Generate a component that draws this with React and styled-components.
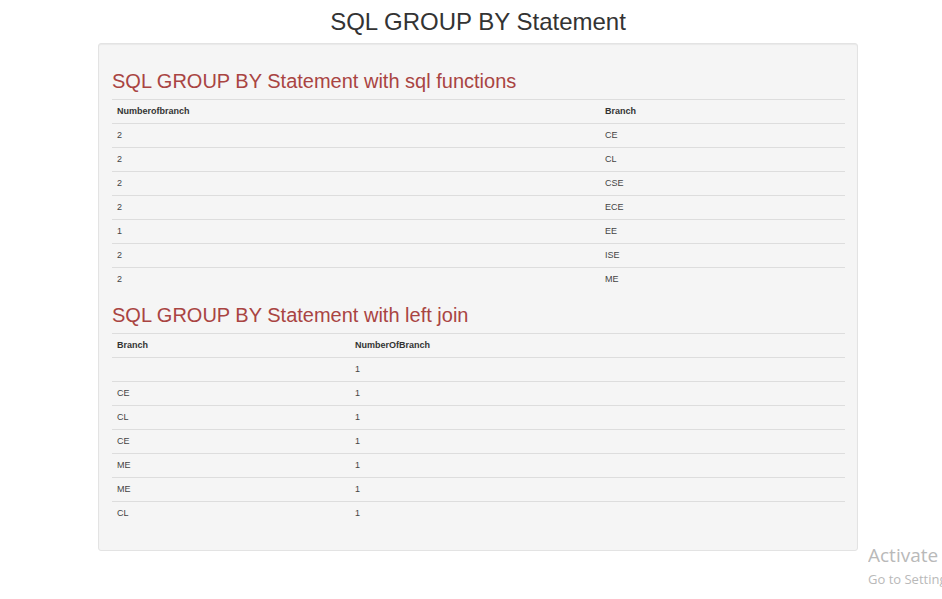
import React from "react";
import styled, { createGlobalStyle } from "styled-components";

const Global = createGlobalStyle`
  html, body { margin: 0; padding: 0; background: #fff; }
  body { font-family: "Liberation Sans", Arial, sans-serif; color: #333; overflow: hidden; }
`;

const Page = styled.div`
  width: 942px;
  height: 599px;
  position: relative;
  overflow: hidden;
`;

const Title = styled.h1`
  margin: 0;
  padding: 8px 0 7px;
  font-size: 24px;
  line-height: 28px;
  font-weight: 400;
  text-align: center;
  color: #333;
  padding-left: 14px;
`;

const Well = styled.div`
  margin-left: 98px;
  width: 760px;
  height: 508px;
  box-sizing: border-box;
  background: #f5f5f5;
  border: 1px solid #e3e3e3;
  border-radius: 3px;
  box-shadow: inset 0 1px 1px rgba(0, 0, 0, 0.05);
  padding: 25px 13px 0 13px;
`;

const Heading = styled.h2`
  margin: ${(p) => p.$top}px 0 0;
  font-size: 20px;
  line-height: 24px;
  font-weight: 400;
  color: #a94442;
  padding-bottom: 6px;
`;

const Table = styled.table`
  width: 733px;
  border-collapse: collapse;
  table-layout: fixed;
  font-size: 9px;
`;

const Th = styled.th`
  text-align: left;
  font-weight: 700;
  height: 22px;
  padding: 0 5px 1px;
  box-sizing: content-box;
  border-top: 1px solid #ddd;
  color: #333;
`;

const Td = styled.td`
  height: 22px;
  padding: 0 5px 1px;
  box-sizing: content-box;
  border-top: 1px solid #ddd;
  color: #444;
`;

const Watermark = styled.div`
  position: absolute;
  left: 868px;
  top: 543px;
  width: 74px;
  overflow: hidden;
  white-space: nowrap;
  color: #b9b9b9;
  font-family: "Open Sans", "Noto Sans", sans-serif;
`;

const WmTitle = styled.div`
  font-size: 19px;
  line-height: 25px;
`;

const WmSub = styled.div`
  font-size: 13px;
  line-height: 22px;
`;

const t1 = [
  ["2", "CE"],
  ["2", "CL"],
  ["2", "CSE"],
  ["2", "ECE"],
  ["1", "EE"],
  ["2", "ISE"],
  ["2", "ME"],
];

const t2 = [
  ["", "1"],
  ["CE", "1"],
  ["CL", "1"],
  ["CE", "1"],
  ["ME", "1"],
  ["ME", "1"],
  ["CL", "1"],
];

function DataTable({ headers, rows, firstWidth }) {
  return (
    <Table>
      <colgroup>
        <col style={{ width: firstWidth }} />
        <col />
      </colgroup>
      <thead>
        <tr>
          {headers.map((h) => (
            <Th key={h}>{h}</Th>
          ))}
        </tr>
      </thead>
      <tbody>
        {rows.map((r, i) => (
          <tr key={i}>
            {r.map((c, j) => (
              <Td key={j}>{c}</Td>
            ))}
          </tr>
        ))}
      </tbody>
    </Table>
  );
}

export default function App() {
  return (
    <Page>
      <Global />
      <Title>SQL GROUP BY Statement</Title>
      <Well>
        <Heading $top={0}>SQL GROUP BY Statement with sql functions</Heading>
        <DataTable headers={["Numberofbranch", "Branch"]} rows={t1} firstWidth={488} />
        <Heading $top={12}>SQL GROUP BY Statement with left join</Heading>
        <DataTable headers={["Branch", "NumberOfBranch"]} rows={t2} firstWidth={238} />
      </Well>
      <Watermark>
        <WmTitle>Activate Windows</WmTitle>
        <WmSub>Go to Settings to activate Windows.</WmSub>
      </Watermark>
    </Page>
  );
}
